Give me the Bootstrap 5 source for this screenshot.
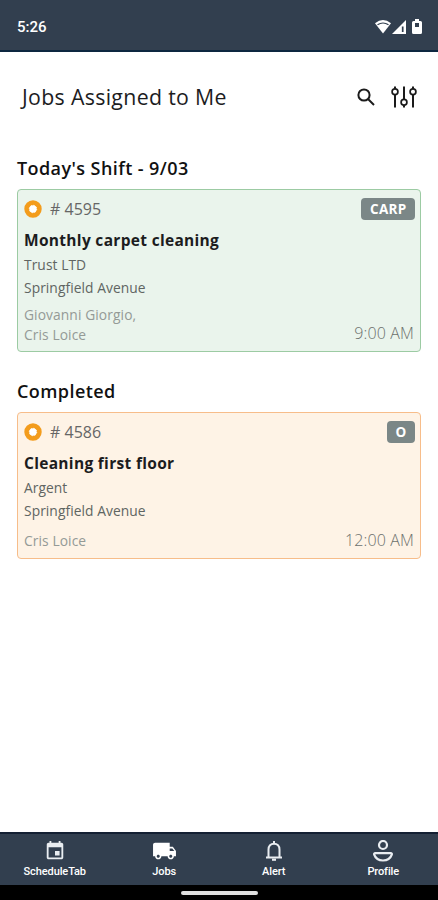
<!DOCTYPE html>
<html lang="en">
<head>
<meta charset="utf-8">
<meta name="viewport" content="width=device-width, initial-scale=1">
<title>Jobs Assigned to Me</title>
<link href="https://cdn.jsdelivr.net/npm/bootstrap@5.3.0/dist/css/bootstrap.min.css" rel="stylesheet">
<style>
  body { font-family: "Open Sans", "Noto Sans", sans-serif; height: 900px; color: #1c1c1e; overflow: hidden; }
  svg { display: block; flex: none; }
  .status { height: 52px; background: #323f4f; border-bottom: 2px solid #0d2740; padding: 3px 15px 0 17px; font: 500 15px Roboto, sans-serif; }
  .page-head { height: 92px; padding: 0 20px 2px 22px; }
  .page-title { font-size: 21.3px; font-weight: 500; line-height: 28px; letter-spacing: .33px; white-space: nowrap; }
  .filter-icon { margin-left: 14px; }
  .jobs-list { padding: 12px 17px 0; }
  .section-title { font-size: 18px; font-weight: 600; line-height: 24px; height: 33px; letter-spacing: .42px; color: #111; white-space: nowrap; }
  .job { border-radius: 4px; padding: 6px 6px 0; border: 1px solid; }
  .job-green { background: #eaf4ec; border-color: #9ccba3; height: 163px; margin-bottom: 27px; }
  .job-orange { background: #fef3e6; border-color: #f7bd8a; height: 147px; }
  .job-top { height: 26px; }
  .job-no { font-size: 16px; line-height: 24px; color: #666; margin-left: 8px; }
  .tag { background: #7b8787; color: #fff; font-size: 13.5px; font-weight: 700; line-height: 22px; height: 22px; letter-spacing: .3px; border-radius: 4px; padding: 0 8.5px; margin-right: -1px; }
  .job-name { font-size: 15.5px; font-weight: 700; line-height: 22px; letter-spacing: .31px; margin-top: 7px; height: 24px; white-space: nowrap; }
  .job-line { font-size: 13.8px; line-height: 23px; letter-spacing: .06px; color: #606562; }
  .people { font-size: 13.8px; line-height: 19.5px; letter-spacing: .09px; color: #949a96; }
  .time { font-size: 16px; line-height: 20px; color: #6c706d; font-weight: 300; letter-spacing: .12px; }
  .crew-pair { margin-top: 6px; }
  .crew-pair .time { padding-bottom: 1px; }
  .crew-one { margin-top: 8px; }
  .crew-one .people { padding-top: 1px; }
  .tabs { height: 53px; background: #323f4f; border-top: 2px solid #142033; font: 500 11px/13px Roboto, sans-serif; }
  .tabs a { padding-top: 6px; width: 109.5px; }
  .tabs a span { margin-top: 3px; white-space: nowrap; letter-spacing: -.1px; }
  .homebar { height: 15px; background: #000; }
  .homebar div { width: 77px; height: 4px; border-radius: 2px; background: #e0e0e0; }
</style>
</head>
<body class="bg-white d-flex flex-column">
  <header class="status d-flex align-items-center justify-content-between text-white">
    <span>5:26</span>
    <div class="d-flex align-items-center">
      <svg width="18" height="16" viewBox="0 0 18 16"><path d="M1 4.200Q9-2 17 4.200L9 14.500Z" fill="#fff"/><path d="M3.500 5.800Q9 2.200 14.500 5.800" fill="none" stroke="#323f4f" stroke-width="1.200"/></svg>
      <svg width="15" height="16" viewBox="0 0 15 16"><path d="M0 15 14 1V15Z" fill="#fff"/><path d="M10.700 7.500V13" stroke="#323f4f" stroke-width="1.700"/></svg>
      <svg class="ms-1" width="12" height="16" viewBox="0 0 12 16"><path d="M4 0H8V2H9.500Q11 2 11 3.500V13.500Q11 15 9.500 15H2.500Q1 15 1 13.500V3.500Q1 2 2.500 2H4Z" fill="#fff"/><path d="M4 4H8V8H4Z" fill="#323f4f"/></svg>
    </div>
  </header>

  <main class="flex-grow-1">
    <div class="page-head d-flex align-items-center justify-content-between">
      <h1 class="page-title m-0">Jobs Assigned to Me</h1>
      <div class="d-flex align-items-center">
        <svg width="20" height="20" viewBox="0 0 20 20" fill="none" stroke="#1b1b1b" stroke-width="2"><circle cx="8" cy="8" r="5.600"/><path d="M12 12 18 18"/></svg>
        <svg class="filter-icon" width="28" height="24" viewBox="0 0 28 24" fill="none" stroke="#1b1b1b" stroke-width="2"><path d="M5 1.500V4M5 9.500V22.500M14 1.500V14.500M14 20V22.500M23 1.500V4M23 9.500V22.500"/><g stroke-width="1.700"><circle cx="5" cy="6.800" r="2.900"/><circle cx="14" cy="17.200" r="2.900"/><circle cx="23" cy="6.800" r="2.900"/></g></svg>
      </div>
    </div>

    <div class="jobs-list">
      <h2 class="section-title m-0">Today's Shift - 9/03</h2>
      <article class="job job-green">
        <div class="job-top d-flex align-items-center">
          <svg width="18" height="18" viewBox="0 0 18 18"><circle cx="9" cy="9" r="6.200" fill="#fff" stroke="#f39c1c" stroke-width="5"/><circle cx="9" cy="9" r="3.700" fill="none" stroke="#fff" stroke-width="1" stroke-dasharray="1.200 1.700"/></svg>
          <span class="job-no"># 4595</span>
          <span class="tag ms-auto">CARP</span>
        </div>
        <h3 class="job-name mb-0">Monthly carpet cleaning</h3>
        <div class="job-line">Trust LTD</div>
        <div class="job-line">Springfield Avenue</div>
        <div class="crew-pair d-flex justify-content-between align-items-end">
          <div class="people">Giovanni Giorgio,<br>Cris Loice</div>
          <div class="time">9:00 AM</div>
        </div>
      </article>

      <h2 class="section-title m-0">Completed</h2>
      <article class="job job-orange">
        <div class="job-top d-flex align-items-center">
          <svg width="18" height="18" viewBox="0 0 18 18"><circle cx="9" cy="9" r="6.200" fill="#fff" stroke="#f39c1c" stroke-width="5"/><circle cx="9" cy="9" r="3.700" fill="none" stroke="#fff" stroke-width="1" stroke-dasharray="1.200 1.700"/></svg>
          <span class="job-no"># 4586</span>
          <span class="tag ms-auto">O</span>
        </div>
        <h3 class="job-name mb-0">Cleaning first floor</h3>
        <div class="job-line">Argent</div>
        <div class="job-line">Springfield Avenue</div>
        <div class="crew-one d-flex justify-content-between align-items-start">
          <div class="people">Cris Loice</div>
          <div class="time">12:00 AM</div>
        </div>
      </article>
    </div>
  </main>

  <nav class="tabs d-flex">
    <a class="d-flex flex-column align-items-center text-white text-decoration-none">
      <svg width="22" height="22" viewBox="0 0 24 24" fill="#e9edf1"><path d="M17 12h-5v5h5v-5zM16 1v2H8V1H6v2H5c-1.110 0-1.990.9-1.990 2L3 19c0 1.100.89 2 2 2h14c1.100 0 2-.9 2-2V5c0-1.100-.9-2-2-2h-1V1h-2zm3 18H5V8h14v11z" fill-rule="evenodd"/></svg>
      <span>ScheduleTab</span>
    </a>
    <a class="d-flex flex-column align-items-center text-white text-decoration-none">
      <svg width="25" height="22" viewBox="0 1 24 20" fill="#fff"><path d="M20 7h-3V3H3c-1.100 0-2 .9-2 2v11h2c0 1.660 1.340 3 3 3s3-1.340 3-3h6c0 1.660 1.340 3 3 3s3-1.340 3-3h2v-5l-3-4zM6 17.500c-.83 0-1.500-.67-1.500-1.500s.67-1.500 1.500-1.500 1.500.67 1.500 1.500-.67 1.500-1.500 1.500zm13.500-9l1.960 2.500H17V8.500h2.500zM18 17.500c-.83 0-1.500-.67-1.500-1.500s.67-1.500 1.500-1.500 1.500.67 1.500 1.500-.67 1.500-1.500 1.500z"/></svg>
      <span>Jobs</span>
    </a>
    <a class="d-flex flex-column align-items-center text-white text-decoration-none">
      <svg width="22" height="22" viewBox="0 0 22 22" fill="none" stroke="#e9edf1" stroke-width="2"><path d="M3 17.500H19M5.500 17V9.500C5.500 6 7.700 3.700 11 3.700S16.500 6 16.500 9.500V17M11 1V3.500"/><path d="M9 19.700H13" stroke-width="2.200"/></svg>
      <span>Alert</span>
    </a>
    <a class="d-flex flex-column align-items-center text-white text-decoration-none">
      <svg width="22" height="22" viewBox="0 0 22 22" fill="none" stroke="#e9edf1" stroke-width="2.200"><circle cx="11" cy="5" r="4"/><path d="M3.300 13.200H18.700Q20.300 13.200 19.800 14.700C18.500 18.500 15 20.500 11 20.500S3.500 18.500 2.200 14.700Q1.700 13.200 3.300 13.200Z"/></svg>
      <span>Profile</span>
    </a>
  </nav>
  <div class="homebar d-flex justify-content-center align-items-center"><div></div></div>
<script src="https://cdn.jsdelivr.net/npm/bootstrap@5.3.0/dist/js/bootstrap.bundle.min.js"></script>
</body>
</html>
